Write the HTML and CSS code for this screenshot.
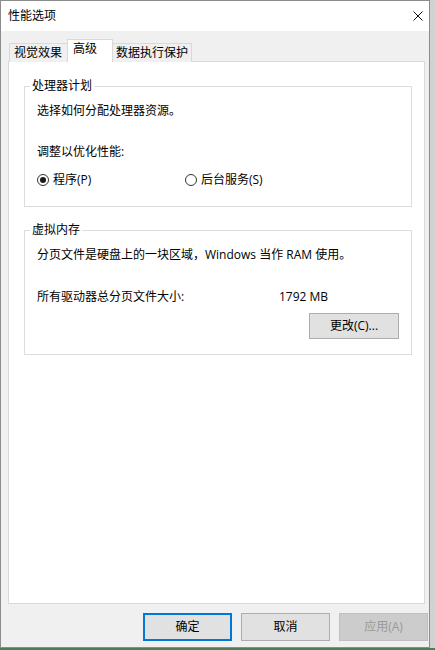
FILE: index.html
```html
<!DOCTYPE html>
<html lang="zh-CN">
<head>
    <meta charset="UTF-8">
    <meta name="viewport" content="width=device-width, initial-scale=1.0">
    <title>性能选项</title>
    <link rel="stylesheet" href="styles.css">
</head>
<body>
    <div class="window">
        <div class="titlebar">
            <span class="title">性能选项</span>
            <svg class="close" width="10" height="10" viewBox="0 0 10 10">
                <path d="M0.5 0.5 L9.5 9.5 M9.5 0.5 L0.5 9.5" stroke="#111" stroke-width="1" fill="none"/>
            </svg>
        </div>

        <div class="body">
            <div class="tabs">
                <div class="tab tab-visual">视觉效果</div>
                <div class="tab tab-advanced active">高级</div>
                <div class="tab tab-dep">数据执行保护</div>
            </div>

            <div class="panel">
                <fieldset class="group">
                    <legend>处理器计划</legend>
                    <p class="line first">选择如何分配处理器资源。</p>
                    <p class="line spaced">调整以优化性能:</p>
                    <div class="radios">
                        <label class="radio-item">
                            <span class="radio checked"></span>
                            <span>程序(P)</span>
                        </label>
                        <label class="radio-item">
                            <span class="radio"></span>
                            <span>后台服务(S)</span>
                        </label>
                    </div>
                </fieldset>

                <fieldset class="group group-memory">
                    <legend>虚拟内存</legend>
                    <p class="line first">分页文件是硬盘上的一块区域，Windows 当作 RAM 使用。</p>
                    <div class="line size-row">
                        <span class="size-label">所有驱动器总分页文件大小:</span>
                        <span>1792 MB</span>
                    </div>
                    <div class="change-row">
                        <button class="btn change">更改(C)...</button>
                    </div>
                </fieldset>
            </div>

            <div class="actions">
                <button class="btn default">确定</button>
                <button class="btn">取消</button>
                <button class="btn disabled">应用(A)</button>
            </div>
        </div>
    </div>
</body>
</html>
```

FILE: styles.css
```css
/* General */
* {
    box-sizing: border-box;
}

body {
    margin: 0;
    padding: 0;
    width: 435px;
    height: 650px;
    /* desktop peeking out at the right and bottom edges */
    background: linear-gradient(to bottom, #d2d2d2 648px, #4f7d57 648px);
    font-family: "Segoe UI", "Open Sans", "Noto Sans CJK SC", sans-serif;
    font-size: 12px;
    color: #000;
    overflow: hidden;
}

.window {
    width: 430px;
    height: 648px;
    border: 1px solid #8c8c8c;
    background: #f0f0f0;
    display: flex;
    flex-direction: column;
}

/* Title bar */
.titlebar {
    height: 30px;
    background: #fff;
    display: flex;
    align-items: center;
    justify-content: space-between;
    padding: 0 6px 0 7px;
    flex-shrink: 0;
}

.title {
    line-height: 16px;
}

/* Dialog body */
.body {
    flex: 1;
    display: flex;
    flex-direction: column;
    padding: 8px 0 6px 7px;
    min-height: 0;
}

.tabs {
    display: flex;
    align-items: flex-end;
    margin-left: 1px;
    margin-bottom: -1px;
    position: relative;
    z-index: 1;
}

.tab {
    height: 19px;
    line-height: 17px;
    border: 1px solid #d9d9d9;
    border-bottom: none;
    background: #f0f0f0;
    white-space: nowrap;
}

.tab-visual {
    width: 58px;
    padding-left: 4px;
    border-right: none;
}

.tab-advanced {
    width: 46px;
    padding-left: 5px;
}

.tab-dep {
    width: 79px;
    padding-left: 3px;
    border-left: none;
}

.tab.active {
    height: 23px;
    line-height: 18px;
    background: #fff;
}

.panel {
    flex: 1;
    margin-right: 4px;
    background: #fff;
    border: 1px solid #d9d9d9;
    padding: 16px 12px 0 15px;
}

/* Group boxes */
.group {
    margin: 0;
    border: 1px solid #dcdcdc;
    padding: 0 12px 18px 12px;
    min-width: 0;
}

.group legend {
    margin-left: -7px;
    padding: 0 2px;
    line-height: 16px;
}

.group-memory {
    margin-top: 15px;
    padding-bottom: 15px;
}

.line {
    margin: 0;
    line-height: 16px;
    white-space: nowrap;
}

.line.first {
    margin-top: 9px;
}

.line.spaced {
    margin-top: 25px;
}

/* Radio buttons */
.radios {
    display: flex;
    margin-top: 12px;
    line-height: 16px;
}

.radio-item {
    display: flex;
    align-items: center;
    gap: 4px;
    width: 148px;
}

.radio {
    width: 12px;
    height: 12px;
    border: 1px solid #333;
    border-radius: 50%;
    background: #fff;
    position: relative;
}

.radio.checked::after {
    content: "";
    position: absolute;
    left: 2px;
    top: 2px;
    width: 6px;
    height: 6px;
    border-radius: 50%;
    background: #1a1a1a;
}

/* Virtual memory */
.size-row {
    display: flex;
    margin-top: 26px;
}

.size-label {
    width: 242px;
}

.change-row {
    display: flex;
    justify-content: flex-end;
    margin-top: 8px;
}

/* Buttons */
.btn {
    font: inherit;
    color: #000;
    background: #e1e1e1;
    border: 1px solid #adadad;
    border-radius: 0;
    width: 89px;
    height: 28px;
    padding: 0;
    line-height: 16px;
}

.btn.change {
    width: 90px;
    height: 26px;
}

.btn.default {
    border: 2px solid #0078d7;
}

.btn.disabled {
    background: #cccccc;
    border-color: #bfbfbf;
    color: #9a9a9a;
}

.actions {
    display: flex;
    justify-content: flex-end;
    gap: 9px;
    margin-top: 9px;
    margin-right: 1px;
}
```
